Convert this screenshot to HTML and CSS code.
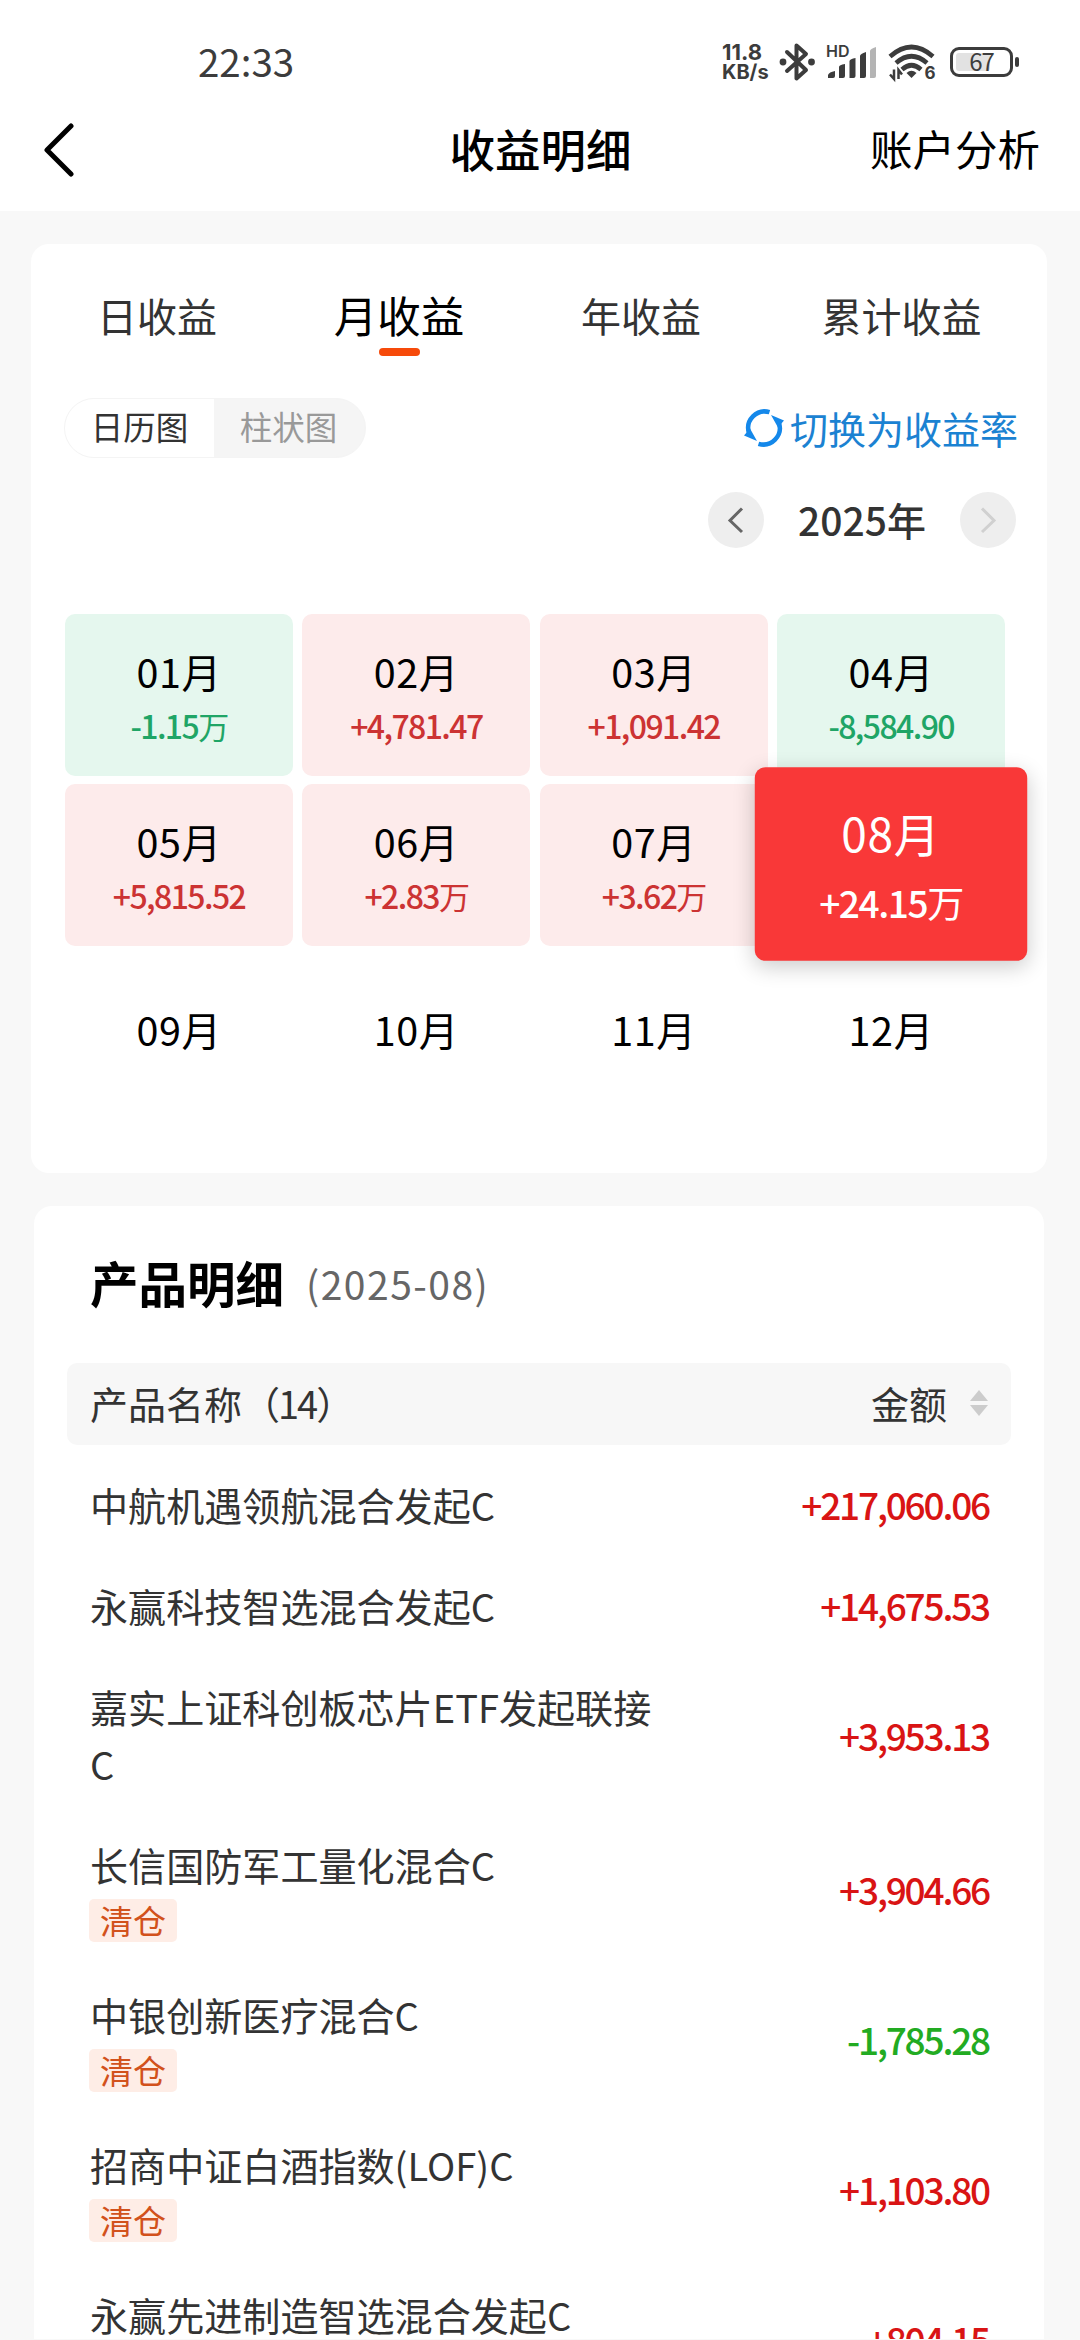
FILE: index.html
```html
<!DOCTYPE html>
<html lang="zh-CN">
<head>
    <meta charset="UTF-8">
    <meta name="viewport" content="width=device-width, initial-scale=1.0">
    <title>收益明细</title>
    <link rel="stylesheet" href="styles.css">
</head>
<body>
    <header class="header">
        <div class="status-bar">
            <span class="clock">22:33</span>
            <div class="status-icons">
                <div class="net-speed"><span>11.8</span><span class="net-unit">KB/s</span></div>
                <svg class="icon-bt" width="36" height="40" viewBox="0 0 36 40" fill="none" stroke="#3c3c3c" stroke-width="4" stroke-linejoin="round" stroke-linecap="round">
                    <path d="M8 10 L27 28 L17.5 36.500 V3.500 L27 12 L8 29"/>
                    <circle cx="4" cy="20" r="3.400" fill="#3c3c3c" stroke="none"/>
                    <circle cx="32.500" cy="20" r="3.400" fill="#3c3c3c" stroke="none"/>
                </svg>
                <div class="signal">
                    <span class="hd">HD</span>
                    <svg width="52" height="34" viewBox="0 0 52 34" fill="#3c3c3c">
                        <path d="M2 33 V30 Q3 27 9 26 V31 Q9 33 7 33 Z"/>
                        <path d="M13 33 V22 Q13 20 19 19 V31 Q19 33 17 33 Z"/>
                        <path d="M23.500 33 V16 Q24 14 29.500 13 V31 Q29.500 33 27.500 33 Z"/>
                        <path d="M34 33 V11 Q34 9 40 7 V31 Q40 33 38 33 Z"/>
                        <path d="M44 33 V6 Q44 4 50 2 V31 Q50 33 48 33 Z" fill="#b4b4b4"/>
                    </svg>
                </div>
                <svg class="icon-wifi" width="48" height="36" viewBox="0 0 48 36" fill="none" stroke="#3c3c3c" stroke-width="4.600">
                    <path d="M2 12.500 Q23.500 -6.500 45 12.500"/>
                    <path d="M8 19 Q23.500 5.500 39 19"/>
                    <path d="M14 25.500 Q23.500 17 33 25.500"/>
                    <path d="M18.500 29 Q23.500 24.500 28.500 29 L23.500 34 Z" fill="#3c3c3c" stroke="none"/>
                    <path d="M6 25.500 V35 L2 30.500 M10.500 35 V26 L14 30.500" stroke-width="2.500"/>
                    <text x="36.500" y="34.500" class="wifi-gen">6</text>
                </svg>
                <div class="battery"><span class="battery-level"></span><span class="battery-text">67</span></div>
            </div>
        </div>
        <nav class="nav">
            <svg class="back" width="34" height="56" viewBox="0 0 34 56" fill="none" stroke="#000" stroke-width="5" stroke-linecap="round" stroke-linejoin="round">
                <path d="M30 5 L6 29 L30 53"/>
            </svg>
            <h1>收益明细</h1>
            <a class="analysis">账户分析</a>
        </nav>
    </header>

    <section class="card profit">
        <div class="tabs">
            <div class="tab">日收益</div>
            <div class="tab active">月收益</div>
            <div class="tab">年收益</div>
            <div class="tab">累计收益</div>
        </div>

        <div class="tools">
            <div class="toggle">
                <span class="on">日历图</span>
                <span>柱状图</span>
            </div>
            <a class="switch">
                <svg width="42" height="42" viewBox="0 0 42 42" fill="none" stroke="#1488ea" stroke-width="4.500">
                    <path d="M26.500 5.200 A16.500 16.500 0 0 0 6 26"/>
                    <path d="M15.500 36.800 A16.500 16.500 0 0 0 36 16"/>
                    <path d="M1 28.500 L7 21.500 L14 34 Z" fill="#1488ea" stroke="none"/>
                    <path d="M41 13.500 L35 20.500 L28 8 Z" fill="#1488ea" stroke="none"/>
                </svg>
                切换为收益率
            </a>
        </div>

        <div class="year-picker">
            <span class="round"><svg width="56" height="56" viewBox="0 0 56 56" fill="none" stroke="#666" stroke-width="3"><path d="M34 16.500 L22 28.500 L34 40"/></svg></span>
            <span class="year">2025年</span>
            <span class="round"><svg width="56" height="56" viewBox="0 0 56 56" fill="none" stroke="#d0d0d0" stroke-width="3"><path d="M22 16.500 L34 28.500 L22 40"/></svg></span>
        </div>

        <div class="months">
            <div class="month down"><b>01月</b><i>-1.15<em>万</em></i></div>
            <div class="month up"><b>02月</b><i>+4,781.47</i></div>
            <div class="month up"><b>03月</b><i>+1,091.42</i></div>
            <div class="month down"><b>04月</b><i>-8,584.90</i></div>
            <div class="month up"><b>05月</b><i>+5,815.52</i></div>
            <div class="month up"><b>06月</b><i>+2.83<em>万</em></i></div>
            <div class="month up"><b>07月</b><i>+3.62<em>万</em></i></div>
            <div class="month selected"><b>08月</b><i>+24.15<em>万</em></i></div>
            <div class="month"><b>09月</b></div>
            <div class="month"><b>10月</b></div>
            <div class="month"><b>11月</b></div>
            <div class="month"><b>12月</b></div>
        </div>
    </section>

    <section class="card products">
        <div class="title">
            <h2>产品明细</h2>
            <span>(2025-08)</span>
        </div>
        <div class="table-head">
            <span>产品名称<span class="count">（14）</span></span>
            <span class="sort">金额
                <svg width="18" height="28" viewBox="0 0 18 28" fill="#ccc"><path d="M9 1 L18 12 H0 Z"/><path d="M0 16 H18 L9 27 Z"/></svg>
            </span>
        </div>
        <ul class="list">
            <li><div class="name">中航机遇领航混合发起C</div><span class="amount">+217,060.06</span></li>
            <li><div class="name">永赢科技智选混合发起C</div><span class="amount">+14,675.53</span></li>
            <li><div class="name">嘉实上证科创板芯片ETF发起联接C</div><span class="amount">+3,953.13</span></li>
            <li><div class="name">长信国防军工量化混合C<span class="tag">清仓</span></div><span class="amount">+3,904.66</span></li>
            <li><div class="name">中银创新医疗混合C<span class="tag">清仓</span></div><span class="amount loss">-1,785.28</span></li>
            <li><div class="name">招商中证白酒指数(LOF)C<span class="tag">清仓</span></div><span class="amount">+1,103.80</span></li>
            <li><div class="name tall">永赢先进制造智选混合发起C</div><span class="amount">+804.15</span></li>
        </ul>
    </section>
</body>
</html>
```
FILE: styles.css
```css
:root {
    --ink: #333;
    --up: #cc3333;
    --down: #1fa566;
}

* {
    box-sizing: border-box;
}

body {
    margin: 0;
    height: 2340px;
    overflow: hidden;
    display: flex;
    flex-direction: column;
    background: #f8f8f8;
    color: var(--ink);
    font-family: 'Noto Sans CJK SC', sans-serif;
}

h1, h2, ul {
    margin: 0;
    padding: 0;
}

b, i, em {
    font-weight: inherit;
    font-style: normal;
}

svg {
    display: block;
    flex: none;
}

/* header */
.header {
    flex: none;
    height: 211px;
    background: #fff;
}

.status-bar {
    height: 100px;
    padding: 24px 62px 0 198px;
    display: flex;
    justify-content: space-between;
    align-items: center;
    color: #3c3c3c;
}

.clock {
    margin-top: -4px;
    font-size: 38.5px;
    line-height: 76px;
}

.status-icons {
    display: flex;
    align-items: center;
    height: 76px;
}

.net-speed {
    width: 57px;
    display: flex;
    flex-direction: column;
    font-family: Inter, sans-serif;
    font-size: 22px;
    font-weight: 700;
    line-height: 20px;
}

.net-unit {
    font-size: 20px;
    line-height: 20px;
}

.signal {
    position: relative;
    margin: 0 10px 0 11px;
}

.hd {
    position: absolute;
    left: 0;
    top: -2px;
    font: 600 16px/16px Inter, sans-serif;
}

.icon-wifi {
    margin-right: 14px;
    overflow: visible;
}

.wifi-gen {
    font: 700 17px Inter, sans-serif;
    fill: #3c3c3c;
    stroke: none;
}

.battery {
    position: relative;
    width: 63px;
    height: 30px;
    margin-right: 5px;
    padding: 3px;
    border: 3px solid #3c3c3c;
    border-radius: 9px;
}

.battery::after {
    content: '';
    position: absolute;
    right: -9px;
    top: 7px;
    width: 4px;
    height: 10px;
    border-radius: 2px;
    background: #3c3c3c;
}

.battery-level {
    display: block;
    width: 34px;
    height: 18px;
    border-radius: 3px;
    background: #e2e2e2;
}

.battery-text {
    position: absolute;
    left: 0;
    right: 0;
    top: -1px;
    text-align: center;
    font: 400 24px/24px 'Noto Sans CJK SC', sans-serif;
    letter-spacing: -1px;
}

.nav {
    height: 98px;
    padding: 0 40px 0 41px;
    display: grid;
    grid-template-columns: 1fr auto 1fr;
    align-items: center;
    color: #000;
}

.nav h1 {
    margin-top: -2px;
    font-size: 45.5px;
    font-weight: 500;
    line-height: 60px;
}

.analysis {
    justify-self: end;
    margin-top: -2px;
    font-size: 42.5px;
    line-height: 60px;
}

.card {
    flex: none;
    background: #fff;
    border-radius: 18px;
}

/* profit calendar */
.profit {
    height: 929px;
    margin: 33px 33px 0 31px;
    padding: 28px 34px 0;
}

.tabs {
    display: flex;
    margin: 0 -34px;
    padding-left: 5px;
}

.tab {
    width: 242px;
    height: 92px;
    display: flex;
    flex-direction: column;
    align-items: center;
    font-size: 40px;
    line-height: 86px;
}

.tab:last-child {
    width: 279px;
}

.tab.active {
    color: #000;
    font-size: 43.5px;
}

.tab.active::after {
    content: '';
    flex: none;
    width: 41px;
    height: 8px;
    margin-top: -10px;
    border-radius: 4px;
    background: #f64a0a;
}

.tools {
    margin-top: 34px;
    display: flex;
    justify-content: space-between;
    align-items: center;
    height: 60px;
}

.toggle {
    width: 302px;
    height: 60px;
    margin-left: -1px;
    display: flex;
    overflow: hidden;
    border: 1px solid #f4f4f4;
    border-radius: 30px;
    background: #f5f5f5;
    color: #999;
    font-size: 32.5px;
    line-height: 54px;
    text-align: center;
}

.toggle span {
    width: 149px;
}

.toggle .on {
    background: #fff;
    color: var(--ink);
}

.switch {
    display: flex;
    align-items: center;
    gap: 5px;
    margin-right: -5px;
    color: #1b82d2;
    font-size: 38px;
    line-height: 54px;
}

.year-picker {
    margin-top: 34px;
    display: flex;
    justify-content: flex-end;
    align-items: center;
    gap: 34px;
    height: 56px;
    margin-right: -3px;
}

.round {
    border-radius: 50%;
    background: #eee;
}

.year {
    font-size: 39px;
    font-weight: 500;
    line-height: 54px;
    margin-top: -2px;
}

.months {
    margin-top: 66px;
    display: grid;
    grid-template-columns: repeat(4, 228px);
    grid-auto-rows: 162px;
    gap: 8px 9.4px;
}

.month {
    display: flex;
    flex-direction: column;
    align-items: center;
    padding-top: 31px;
    border-radius: 10px;
}

.month b {
    color: #000;
    font-size: 39.5px;
    line-height: 52px;
    letter-spacing: 0.6px;
}

.month i {
    font-size: 32px;
    font-weight: 500;
    line-height: 57px;
    letter-spacing: -1.6px;
}

.month em {
    font-size: 31px;
    font-weight: 400;
}

.month:nth-child(n+9) {
    padding-top: 49px;
}

.up {
    background: #fdebeb;
    color: var(--up);
}

.down {
    background: #e5f7ee;
    color: var(--down);
}

.selected {
    position: relative;
    top: -1px;
    padding-top: 28px;
    transform: scale(1.195);
    background: #f93838;
    color: #fff;
    border-radius: 9px;
    box-shadow: 0 5px 18px rgba(0, 0, 0, 0.2);
}

.selected b {
    color: #fff;
    font-size: 38.5px;
}

.selected i {
    font-size: 31px;
    line-height: 66px;
    letter-spacing: -1.2px;
}

/* product list */
.products {
    margin: 33px 36px 0 34px;
    height: 1133px;
    padding: 41px 33px 0;
    overflow: hidden;
    border-radius: 18px 18px 0 0;
}

.title {
    display: flex;
    align-items: center;
    gap: 22px;
    height: 72px;
    padding-left: 23px;
}

.title h2 {
    color: #000;
    font-size: 48.5px;
    font-weight: 700;
    line-height: 70px;
    margin-top: -2px;
}

.title span {
    color: #666;
    font-size: 39px;
    line-height: 70px;
    letter-spacing: 1.5px;
}

.table-head {
    margin-top: 44px;
    height: 82px;
    padding: 0 23px 3px;
    display: flex;
    justify-content: space-between;
    align-items: center;
    border-radius: 10px;
    background: #f7f7f7;
    font-size: 38px;
    line-height: 78px;
}

.count {
    letter-spacing: -2px;
}

.sort {
    display: flex;
    align-items: center;
    gap: 23px;
}

.list {
    margin-top: 8.5px;
    padding: 0 23px;
    list-style: none;
}

.list li {
    display: flex;
    justify-content: space-between;
    align-items: center;
    padding: 22px 0;
}

.name {
    width: 572px;
    font-size: 38.1px;
    line-height: 57px;
}

.name.tall {
    min-height: 106px;
}

.tag {
    display: block;
    width: 88px;
    margin: 6px 0 0 -1px;
    border-radius: 5px;
    background: #feede6;
    color: #d2521c;
    font-size: 33px;
    line-height: 43px;
    text-align: center;
}

.amount {
    margin-right: -1px;
    color: #d91414;
    font-size: 37px;
    font-weight: 500;
    line-height: 54px;
    letter-spacing: -2.2px;
}

.amount.loss {
    color: #22ab22;
}
```
